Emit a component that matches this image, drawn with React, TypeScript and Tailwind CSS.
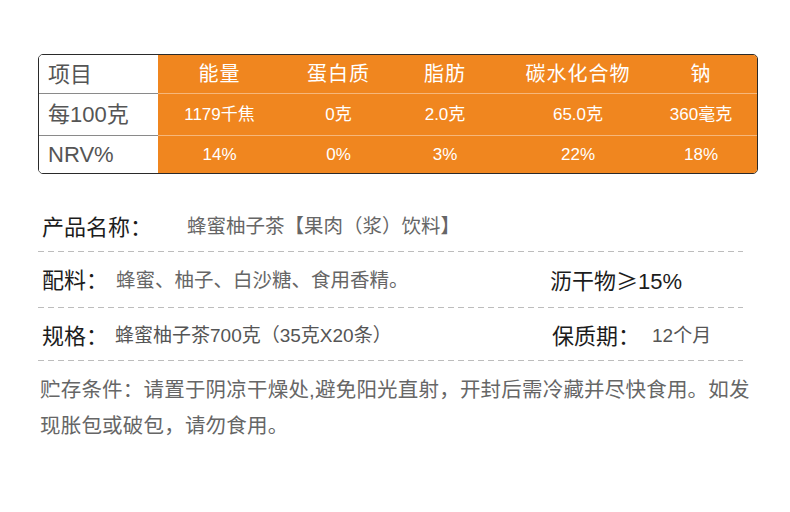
const font = "font-['Liberation_Sans','Noto_Sans_CJK_SC',sans-serif]";

const header = ["能量", "蛋白质", "脂肪", "碳水化合物", "钠"];
const rows = [
  { label: "每100克", values: ["1179千焦", "0克", "2.0克", "65.0克", "360毫克"], h: "h-[42px]" },
  { label: "NRV%", values: ["14%", "0%", "3%", "22%", "18%"], h: "h-[37px]" },
];

function Dash() {
  return (
    <div className="h-px w-[705px] bg-[linear-gradient(to_right,#bdbdbd_6px,transparent_6px)] bg-[length:10px_1px] bg-repeat-x" />
  );
}

function NutritionTable() {
  const grid = "grid grid-cols-[119px_123px_115px_98px_168px_1fr]";
  return (
    <div className="w-[720px] overflow-hidden rounded-[5px] border border-[#2a2a2a]">
      <div className={`${grid} h-[39px]`}>
        <div className="flex items-center border-b border-[#8a8a8a] bg-white pl-[9px] text-[22px] text-[#555]">项目</div>
        {header.map((h, i) => (
          <div
            key={h}
            className={`flex items-center justify-center border-b border-[#f6b77a] bg-[#f0861f] text-[20px] tracking-[1px] text-white ${i === 4 ? "pr-[17px]" : ""}`}
          >
            {h}
          </div>
        ))}
      </div>
      {rows.map((r, ri) => (
        <div key={r.label} className={`${grid} ${r.h}`}>
          <div
            className={`flex items-center bg-white pl-[9px] text-[22px] text-[#555] ${ri === 0 ? "border-b border-[#8a8a8a]" : ""}`}
          >
            {r.label}
          </div>
          {r.values.map((v, i) => (
            <div
              key={i}
              className={`flex items-center justify-center bg-[#f0861f] text-[17px] text-white ${ri === 0 ? "border-b border-[#f6b77a]" : ""} ${i === 4 ? "pr-[17px]" : ""}`}
            >
              {v}
            </div>
          ))}
        </div>
      ))}
    </div>
  );
}

export default function App() {
  return (
    <main className={`h-[512px] w-[790px] bg-white pl-[38px] pt-[54px] ${font}`}>
      <NutritionTable />

      <section className="mt-[29px]">
        <div className="flex h-[48px] items-center pl-[4px]">
          <span className="text-[22px] text-[#1c1c1c]">产品名称：</span>
          <span className="ml-[35px] text-[19.5px] text-[#666]">蜂蜜柚子茶【果肉（浆）饮料】</span>
        </div>
        <Dash />

        <div className="flex h-[55px] items-center pt-[2px]">
          <div className="flex w-[512px] items-center pl-[4px]">
            <span className="text-[22px] text-[#1c1c1c]">配料：</span>
            <span className="ml-[8px] text-[19.5px] text-[#666]">蜂蜜、柚子、白沙糖、食用香精。</span>
          </div>
          <span className="text-[22px] text-[#1c1c1c]">
            沥干物<span className="font-['Noto_Sans_CJK_SC',sans-serif]">≥</span>15%
          </span>
        </div>
        <Dash />

        <div className="flex h-[52px] items-center pt-[4px]">
          <div className="flex w-[514px] items-center pl-[4px]">
            <span className="text-[22px] text-[#1c1c1c]">规格：</span>
            <span className="ml-[7px] text-[19px] text-[#555]">蜂蜜柚子茶700克（35克X20条）</span>
          </div>
          <span className="text-[22px] text-[#1c1c1c]">保质期：</span>
          <span className="ml-[12px] text-[19px] text-[#555]">12个月</span>
        </div>
        <Dash />

        <p className="mt-[11px] pl-[2px] text-[20.5px] leading-[36px] tracking-[0.2px] text-[#666]">
          贮存条件：请置于阴凉干燥处,避免阳光直射，开封后需冷藏并尽快食用。如发
          <br />
          现胀包或破包，请勿食用。
        </p>
      </section>
    </main>
  );
}
